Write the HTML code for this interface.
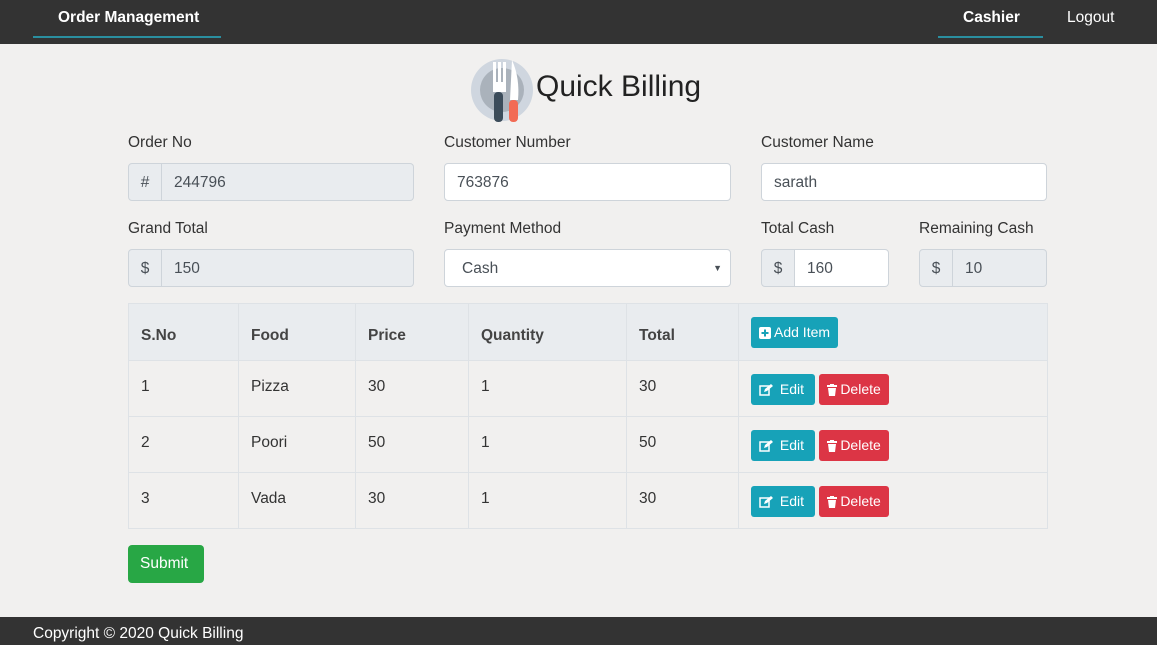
<!DOCTYPE html>
<html><head><style>
*{box-sizing:border-box;margin:0;padding:0}
body{width:1157px;height:645px;background:#f1f0ef;font-family:"Liberation Sans",sans-serif;color:#333;position:relative;overflow:hidden;font-size:15.5px}
.nav{position:absolute;top:0;left:0;width:1157px;height:44px;background:#333}
.nav a{position:absolute;color:#fff;font-weight:bold;font-size:15.5px;top:9px}
.ul{position:absolute;height:2px;background:#2a8fa0;top:36px}
.lbl{position:absolute;color:#333}
.inp{position:absolute;height:38px;border:1px solid #ced4da;border-radius:4px;background:#fff;color:#495057;padding:10px 12px}
.ro{background:#e9ecef}
.grp{position:absolute;height:38px;display:flex}
.grp .pre{width:34px;border:1px solid #ced4da;border-radius:4px 0 0 4px;background:#e9ecef;text-align:center;padding-top:10px;color:#495057}
.grp .v{flex:1;border:1px solid #ced4da;border-left:none;border-radius:0 4px 4px 0;padding:10px 12px;color:#495057}
table{position:absolute;left:128px;top:303px;width:920px;border-collapse:collapse}
td,th{border:1px solid #dee2e6;text-align:left;padding:0 12px;height:56px;vertical-align:top;padding-top:17px}
th{background:#e9ecef;height:57px;padding-top:23px;color:#444}
.b{display:inline-block;color:#fff;font-size:14px;font-weight:normal;border-radius:3px;height:31px;padding:7px 8px;vertical-align:top}
.e{background:#17a2b8}.d{background:#dc3545}
.b svg{vertical-align:-2px;margin-right:3px}
</style></head><body>
<div class="nav">
<a style="left:58px">Order Management</a><div class="ul" style="left:33px;width:188px"></div>
<a style="left:963px">Cashier</a><div class="ul" style="left:938px;width:105px"></div>
<a style="left:1067px;font-weight:normal">Logout</a>
</div>
<svg style="position:absolute;left:470px;top:58px" width="64" height="66" viewBox="0 0 64 66">
<circle cx="32" cy="32" r="31" fill="#cfd6df"/><circle cx="32" cy="32" r="22" fill="#aab2bb"/>
<rect x="23" y="4" width="3" height="22" fill="#fff"/><rect x="28" y="4" width="3" height="22" fill="#fff"/><rect x="33" y="4" width="3" height="22" fill="#fff"/>
<rect x="23" y="24" width="13" height="10" fill="#fff"/><rect x="24" y="34" width="9" height="30" rx="4" fill="#3c4c5a"/>
<path d="M42 2 Q50 20 48 42 L40 42 Z" fill="#fff"/><rect x="39" y="42" width="9" height="22" rx="4" fill="#f26b55"/>
</svg>
<div style="position:absolute;left:536px;top:70px;font-size:30px;color:#222">Quick Billing</div>
<div class="lbl" style="left:128px;top:134px">Order No</div>
<div class="lbl" style="left:444px;top:134px">Customer Number</div>
<div class="lbl" style="left:761px;top:134px">Customer Name</div>
<div class="grp" style="left:128px;top:163px;width:286px"><div class="pre">#</div><div class="v ro">244796</div></div>
<div class="inp" style="left:444px;top:163px;width:287px">763876</div>
<div class="inp" style="left:761px;top:163px;width:286px">sarath</div>
<div class="lbl" style="left:128px;top:220px">Grand Total</div>
<div class="lbl" style="left:444px;top:220px">Payment Method</div>
<div class="lbl" style="left:761px;top:220px">Total Cash</div>
<div class="lbl" style="left:919px;top:220px">Remaining Cash</div>
<div class="grp" style="left:128px;top:249px;width:286px"><div class="pre">$</div><div class="v ro">150</div></div>
<div class="inp" style="left:444px;top:249px;width:287px;padding-left:17px">Cash<span style="position:absolute;right:8px;top:13px;font-size:9px">▼</span></div>
<div class="grp" style="left:761px;top:249px;width:128px"><div class="pre">$</div><div class="v" style="background:#fff">160</div></div>
<div class="grp" style="left:919px;top:249px;width:128px"><div class="pre">$</div><div class="v ro">10</div></div>
<table>
<tr><th style="width:110px">S.No</th><th style="width:117px">Food</th><th style="width:113px">Price</th><th style="width:158px">Quantity</th><th style="width:112px">Total</th><th style="padding-top:13px"><span class="b e"><svg width="12" height="12" viewBox="0 0 12 12"><rect width="12" height="12" rx="2" fill="#fff"/><path d="M6 2.5v7M2.5 6h7" stroke="#17a2b8" stroke-width="2"/></svg>Add Item</span></th></tr>
<tr><td>1</td><td>Pizza</td><td>30</td><td>1</td><td>30</td><td style="padding-top:13px"><span class="b e" style="width:64px"><svg width="14" height="12" viewBox="0 0 14 12"><rect x="1" y="2" width="9" height="9" fill="none" stroke="#fff" stroke-width="1.5"/><path d="M5 8l1-3 6-5 2 2-6 5z" fill="#fff"/></svg>&nbsp;Edit</span> <span class="b d"><svg width="10" height="12" viewBox="0 0 10 12"><rect x="0" y="1" width="10" height="2" fill="#fff"/><rect x="3" y="0" width="4" height="2" fill="#fff"/><path d="M1 4h8l-1 8H2z" fill="#fff"/></svg>Delete</span></td></tr>
<tr><td>2</td><td>Poori</td><td>50</td><td>1</td><td>50</td><td style="padding-top:13px"><span class="b e" style="width:64px"><svg width="14" height="12" viewBox="0 0 14 12"><rect x="1" y="2" width="9" height="9" fill="none" stroke="#fff" stroke-width="1.5"/><path d="M5 8l1-3 6-5 2 2-6 5z" fill="#fff"/></svg>&nbsp;Edit</span> <span class="b d"><svg width="10" height="12" viewBox="0 0 10 12"><rect x="0" y="1" width="10" height="2" fill="#fff"/><rect x="3" y="0" width="4" height="2" fill="#fff"/><path d="M1 4h8l-1 8H2z" fill="#fff"/></svg>Delete</span></td></tr>
<tr><td>3</td><td>Vada</td><td>30</td><td>1</td><td>30</td><td style="padding-top:13px"><span class="b e" style="width:64px"><svg width="14" height="12" viewBox="0 0 14 12"><rect x="1" y="2" width="9" height="9" fill="none" stroke="#fff" stroke-width="1.5"/><path d="M5 8l1-3 6-5 2 2-6 5z" fill="#fff"/></svg>&nbsp;Edit</span> <span class="b d"><svg width="10" height="12" viewBox="0 0 10 12"><rect x="0" y="1" width="10" height="2" fill="#fff"/><rect x="3" y="0" width="4" height="2" fill="#fff"/><path d="M1 4h8l-1 8H2z" fill="#fff"/></svg>Delete</span></td></tr>
</table>
<div style="position:absolute;left:128px;top:545px;width:76px;height:38px;background:#28a745;border-radius:4px;color:#fff;padding:10px 12px">Submit</div>
<div style="position:absolute;left:0;top:617px;width:1157px;height:28px;background:#333;color:#fff;padding:8px 33px">Copyright © 2020 Quick Billing</div>
</body></html>
